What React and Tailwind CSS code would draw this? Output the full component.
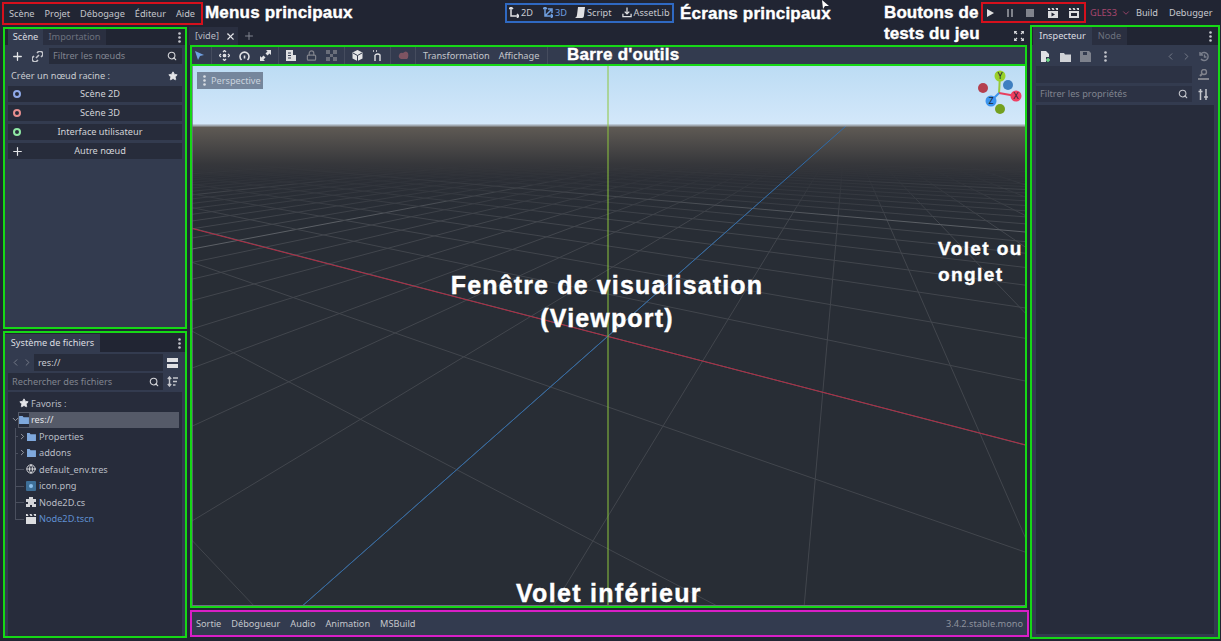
import { Plus, Search, Star, ChevronLeft, ChevronRight, ChevronDown, Lock, Globe, X } from 'lucide-react';

const UI = "font-['Noto_Sans',sans-serif]";

// Ground grid: each family runs to a vanishing point on the horizon and cuts y=608 at even steps
const VP_A = [846, 126];
const VP_B = [-200, 126];
const range = (from, to) => Array.from({ length: to - from + 1 }, (_, i) => from + i);

function ViewportDrawing() {
  const familyA = range(-60, 30);
  const familyB = range(-3, 70);
  return (
    <svg width="833" height="540" viewBox="192 66 833 540" className="block">
      <defs>
        <linearGradient id="sky" x1="0" y1="0" x2="0" y2="1">
          <stop offset="0" stopColor="#bcdcf4" />
          <stop offset="1" stopColor="#d4e8fa" />
        </linearGradient>
        <linearGradient id="fade" x1="0" y1="0" x2="0" y2="1">
          <stop offset="0" stopColor="#605b55" />
          <stop offset="0.4" stopColor="#36373b" />
          <stop offset="0.55" stopColor="#2c2f36" stopOpacity="0.85" />
          <stop offset="1" stopColor="#282d35" stopOpacity="0" />
        </linearGradient>
      </defs>
      <rect x="192" y="66" width="833" height="60" fill="url(#sky)" />
      <rect x="192" y="126" width="833" height="480" fill="#282d35" />
      {familyA.map((k) => (
        <line key={k} x1={VP_A[0]} y1={VP_A[1]} x2={300 + 252 * k} y2="608" stroke={k % 8 === 0 ? '#5c6066' : '#42464d'} strokeWidth="1" />
      ))}
      {familyB.map((k) => (
        <line key={k} x1={VP_B[0]} y1={VP_B[1]} x2={1651 + 465 * k} y2="608" stroke={k % 8 === 0 ? '#5c6066' : '#42464d'} strokeWidth="1" />
      ))}
      <line x1="190" y1="228" x2="1026" y2="445" stroke="#b02c44" strokeWidth="1" />
      <rect x="192" y="126" width="833" height="95" fill="url(#fade)" />
      <line x1="846" y1="126" x2="300" y2="608" stroke="#2f6cab" strokeWidth="1" />
      <rect x="192" y="124.500" width="833" height="2" fill="#a0a8b0" />
      <line x1="608" y1="66" x2="608" y2="606" stroke="#8dc63f" strokeWidth="1" />
      <line x1="192" y1="66" x2="192" y2="606" stroke="#6b7082" strokeWidth="1.500" />
      <line x1="192" y1="605.500" x2="1025" y2="605.500" stroke="#6b7082" strokeWidth="1" />
    </svg>
  );
}

function Gizmo() {
  return (
    <svg width="48" height="48" viewBox="0 0 48 48" className="absolute left-[784px] top-[2px]">
      <line x1="23" y1="25" x2="24" y2="8" stroke="#97c93a" strokeWidth="2" />
      <line x1="23" y1="25" x2="40" y2="28" stroke="#e8405f" strokeWidth="2" />
      <line x1="23" y1="25" x2="15" y2="33" stroke="#3f94ea" strokeWidth="2" />
      <circle cx="7" cy="20" r="5" fill="#b5404f" />
      <circle cx="32" cy="17" r="5" fill="#3f7fc0" />
      <circle cx="24" cy="41" r="5" fill="#74a01f" />
      <circle cx="24" cy="8" r="5.500" fill="#9ad029" />
      <circle cx="40" cy="28" r="5.500" fill="#ee3f63" />
      <circle cx="15" cy="33" r="5.500" fill="#3c94ee" />
      <text x="24" y="11" textAnchor="middle" fontSize="9" fill="#1e2530" fontFamily="Noto Sans">Y</text>
      <text x="40" y="31" textAnchor="middle" fontSize="9" fill="#1e2530" fontFamily="Noto Sans">X</text>
      <text x="15" y="36" textAnchor="middle" fontSize="9" fill="#1e2530" fontFamily="Noto Sans">Z</text>
    </svg>
  );
}

function Dots({ className = 'text-[#c4c6cc]' }) {
  return (
    <svg width="3" height="11" viewBox="0 0 3 11" className={`block ${className}`}>
      <circle cx="1.500" cy="1.500" r="1.300" fill="currentColor" />
      <circle cx="1.500" cy="5.500" r="1.300" fill="currentColor" />
      <circle cx="1.500" cy="9.500" r="1.300" fill="currentColor" />
    </svg>
  );
}

function Folder() {
  return (
    <svg width="10" height="9" viewBox="0 0 11 10" className="shrink-0">
      <path d="M0 1h4l1 1.500h6V10H0z" fill="#7fa8dc" />
    </svg>
  );
}

function Clap({ inner }) {
  return (
    <svg width="12" height="11" viewBox="0 0 12 11" className="shrink-0">
      <path d="M1 4h10v7H1zM1 1h1.500l1 2H1zM4.500 1h2l1 2h-2zM8.500 1H11v2H9.500z" fill="#dcdde0" />
      {inner === 'play' ? <path d="M4.500 5.500l3.500 2-3.500 2z" fill="#212533" /> : null}
      {inner === 'custom' ? <path d="M3 6h6v3H3z" fill="#212533" /> : null}
    </svg>
  );
}

function ToolIcon({ children, className = 'w-[20.5px]' }) {
  return <span className={`flex justify-center ${className}`}>{children}</span>;
}

function Sep() {
  return <span className="mx-[2px] h-[17px] w-px bg-[#454c5e]" />;
}

function CreateButton({ ring, label }) {
  return (
    <div className="relative flex h-[16px] items-center justify-center bg-[#272c3b] pl-[10px] text-[#d2d3d7]">
      <span className="absolute left-[5px]">{ring}</span>
      {label}
    </div>
  );
}

function Ring({ color }) {
  return <span className="block h-[8px] w-[8px] rounded-full border-2" style={{ borderColor: color }} />;
}

function Tab({ active, children, className = '' }) {
  return (
    <span className={`flex items-center whitespace-nowrap ${active ? 'bg-[#333b4f] text-[#dcdde0]' : 'bg-[#2a2f40] text-[#6c717e]'} ${className}`}>
      {children}
    </span>
  );
}

function TreeRow({ icon, label, chevron, last }) {
  return (
    <div className="relative flex h-[16.5px] items-center gap-[2px] pl-[17px]">
      <span className={`absolute left-[7px] top-0 w-px bg-[#4a4f5e] ${last ? 'h-[8px]' : 'h-full'}`} />
      <span className="absolute left-[7px] top-[8px] h-px w-[9px] bg-[#4a4f5e]" />
      {chevron ? <ChevronRight size={9} strokeWidth={2.4} className="absolute left-[10px] bg-[#272c3b] text-[#a3a6ae]" /> : null}
      <span className="flex w-[12px] justify-center">{icon}</span>
      <span>{label}</span>
    </div>
  );
}

function Note({ className, children }) {
  return (
    <span className={`absolute font-['Liberation_Sans',sans-serif] font-bold whitespace-nowrap text-white [-webkit-text-stroke:0.4px_white] ${className}`}>
      {children}
    </span>
  );
}

export default function App() {
  return (
    <div className={`${UI} relative flex h-[641px] w-[1221px] flex-col overflow-hidden bg-[#212533] text-[9.2px] leading-none text-[#c8cad0]`}>
      {/* top bar */}
      <header className="flex h-[25px] items-center">
        <nav className="ml-[2px] mt-[2px] flex h-[23px] w-[201px] items-center gap-[10px] border-2 border-[#d6101c] pl-[5px] text-[#c4c6cb]">
          <span>Scène</span>
          <span>Projet</span>
          <span>Débogage</span>
          <span>Éditeur</span>
          <span>Aide</span>
        </nav>
        <div className="ml-[302px] flex h-[20px] w-[169px] items-center gap-[10px] border-2 border-[#2f69c2] pl-[2px]">
          <span className="flex items-center gap-[2px]">
            <svg width="10" height="11" viewBox="0 0 10 11" fill="none" stroke="#dfe0e3" strokeWidth="1.500"><path d="M2 0v9h8M0 2l2-2 2 2M8 7l2 2-2 2" /></svg>2D
          </span>
          <span className="flex items-center gap-[2px] text-[#6f9fe0]">
            <svg width="10" height="11" viewBox="0 0 10 11" fill="none" stroke="#6f9fe0" strokeWidth="1.500"><path d="M2 0v9h8M2 9l6-6M0 2l2-2 2 2M5 2h4v4M8 7l2 2-2 2" /></svg>3D
          </span>
          <span className="-ml-[2px] flex items-center gap-[2px]">
            <svg width="10" height="11" viewBox="0 0 10 11"><path d="M3 0h7l-1 8q0 3-2 3H0q2-1 2-3z" fill="#dfe0e3" /></svg>Script
          </span>
          <span className="flex items-center gap-[2px]">
            <svg width="10" height="11" viewBox="0 0 11 11" fill="none" stroke="#dfe0e3" strokeWidth="1.400"><path d="M5.500 0v7M3 4.500l2.500 2.500L8 4.500M1 7v3h9V7" /></svg>AssetLib
          </span>
        </div>
        <div className="ml-[307px] mt-[2px] flex h-[21px] w-[105px] items-center gap-[10px] self-start border-2 border-[#d6101c] pl-[2px]">
          <svg width="10" height="10" viewBox="0 0 10 10"><path d="M2 1l7 4-7 4z" fill="#e0e0e0" /></svg>
          <svg width="10" height="10" viewBox="0 0 10 10"><path d="M2 1h2v8H2zM6 1h2v8H6z" fill="#80838c" /></svg>
          <svg width="10" height="10" viewBox="0 0 10 10"><path d="M1 1h8v8H1z" fill="#80838c" /></svg>
          <span className="ml-[2px]"><Clap inner="play" /></span>
          <span className="-ml-[1px]"><Clap inner="custom" /></span>
        </div>
        <span className="ml-[4px] flex items-center gap-[1px] text-[#a8476f]">GLES3 <ChevronDown size={10} className="ml-[3px]" /></span>
        <span className="ml-[5px]">Build</span>
        <span className="ml-[11px]">Debugger</span>
      </header>

      <div className="flex flex-1">
        {/* left docks */}
        <aside className="flex w-[188px] flex-col pt-[2px]">
          <section className="ml-[3px] flex h-[302px] w-[184px] flex-col border-2 border-[#16d816]">
            <div className="flex h-[16px] items-center pl-[3px] pr-[4px]">
              <Tab active className="h-[16px] w-[35px] justify-center">Scène</Tab>
              <Tab className="h-[16px] w-[63px] justify-center">Importation</Tab>
              <span className="ml-auto"><Dots /></span>
            </div>
            <div className="flex flex-1 flex-col bg-[#333b4f] px-[3px] pt-[3px]">
              <div className="flex h-[16px] items-center">
                <Plus size={13} strokeWidth={2.4} className="ml-[3px] text-[#e4e5e8]" />
                <svg width="11" height="11" viewBox="0 0 11 11" fill="none" stroke="#c4c6cc" strokeWidth="1.600" className="ml-[7.5px]"><path d="M5 2l1.500-1.500q2-1 3.500.5t.5 3.500L9 6M6 9l-1.500 1.500q-2 1-3.500-.5T.5 6.500L2 5M4 7l3-3" /></svg>
                <span className="ml-[6.5px] flex h-[16px] flex-1 items-center justify-between bg-[#272c3b] pl-[4px] pr-[5px] text-[#80848f]">
                  Filtrer les nœuds
                  <Search size={10} strokeWidth={2.6} className="text-[#d4d5d9]" />
                </span>
              </div>
              <div className="mt-[2px] flex h-[19px] items-center justify-between pl-[3px] pr-[4px] text-[#c9cbd0]">
                Créer un nœud racine :
                <Star size={10} fill="#e4e5e8" className="text-[#e4e5e8]" />
              </div>
              <div className="mt-[1px] flex flex-col gap-[3px]">
                <CreateButton ring={<Ring color="#8fa9e8" />} label="Scène 2D" />
                <CreateButton ring={<Ring color="#e88f8f" />} label="Scène 3D" />
                <CreateButton ring={<Ring color="#8fe8a4" />} label="Interface utilisateur" />
                <CreateButton ring={<Plus size={13} strokeWidth={2.2} className="-ml-[2px] text-[#e4e5e8]" />} label="Autre nœud" />
              </div>
            </div>
          </section>

          <section className="ml-[3px] mt-[2px] flex h-[307px] w-[184px] flex-col border-2 border-[#16d816] pt-[1px]">
            <div className="flex h-[18px] items-center pr-[4px]">
              <Tab active className="h-[18px] w-[95px] justify-center">Système de fichiers</Tab>
              <span className="ml-auto"><Dots /></span>
            </div>
            <div className="flex flex-1 flex-col bg-[#333b4f] px-[3px] pt-[2px]">
              <div className="flex h-[17px] items-center">
                <ChevronLeft size={11} className="ml-[2px] text-[#7a7f8c]" />
                <ChevronRight size={11} className="ml-[1px] text-[#7a7f8c]" />
                <span className="ml-[1px] flex h-[17px] w-[129px] items-center bg-[#272c3b] pl-[4px]">res://</span>
                <span className="ml-[4px] flex flex-col gap-[2px]">
                  <span className="block h-[4px] w-[11px] bg-[#dfe0e3]" />
                  <span className="block h-[4px] w-[11px] bg-[#dfe0e3]" />
                </span>
              </div>
              <div className="mt-[2px] flex h-[17px] items-center">
                <span className="flex h-[17px] w-[155px] items-center justify-between bg-[#272c3b] pl-[4px] pr-[4px] text-[#80848f]">
                  Rechercher des fichiers
                  <Search size={10} strokeWidth={2.6} className="text-[#d4d5d9]" />
                </span>
                <svg width="11" height="11" viewBox="0 0 11 11" fill="none" stroke="#c4c6cc" strokeWidth="1.400" className="ml-[4px]"><path d="M2.500 1v9M.8 3l1.700-2L4.200 3M.8 8l1.700 2 1.700-2M6 2h5M6 5.500h4M6 9h2.500" /></svg>
              </div>
              <div className="mt-[2px] flex-1 bg-[#272c3b] pb-[2px] pt-[3px] text-[#b9bcc4]">
                <div className="flex h-[16.5px] items-center gap-[2px] pl-[11px]">
                  <Star size={10} fill="#e4e5e8" className="text-[#e4e5e8]" />
                  Favoris :
                </div>
                <div className="relative ml-[10px] mr-[3px] flex h-[16.5px] items-center bg-[#555a68] text-[#e4e5e8]">
                  <ChevronDown size={9} strokeWidth={2.4} className="absolute -left-[7px] text-[#a3a6ae]" />
                  <span className="ml-[1px] flex h-[14px] w-[10px] items-center justify-center bg-[#272c3b]"><Folder /></span>
                  <span className="ml-[2px]">res://</span>
                </div>
                <TreeRow chevron icon={<Folder />} label="Properties" />
                <TreeRow chevron icon={<Folder />} label="addons" />
                <TreeRow icon={<Globe size={10} strokeWidth={2.4} className="text-[#d4d5d9]" />} label="default_env.tres" />
                <TreeRow icon={<span className="block h-[10px] w-[10px] rounded-[1px] bg-[#3e6f98] pt-[3px]"><span className="mx-auto block h-[4px] w-[4px] rounded-full bg-[#8cc0ec]" /></span>} label="icon.png" />
                <TreeRow icon={<svg width="10" height="10" viewBox="0 0 10 10"><path d="M3 0h4v2h3v3H8v2h2v3H6V8H4v2H0V7h2V5H0V2h3z" fill="#d4d5d9" /></svg>} label="Node2D.cs" />
                <TreeRow last icon={<Clap />} label={<span className="text-[#5f8fd0]">Node2D.tscn</span>} />
              </div>
            </div>
          </section>
        </aside>

        {/* center */}
        <main className="flex w-[842px] flex-col pl-[2px]">
          <div className="flex h-[20px] items-center pr-[6px] pt-[2px]">
            <span className="-ml-[1px] flex h-[18px] w-[49px] items-center justify-between bg-[#2a2f40] pl-[6px] pr-[2px] text-[#b9bcc4]">
              [vide]
              <X size={11} strokeWidth={2.4} className="text-[#e4e5e8]" />
            </span>
            <Plus size={12} className="ml-[5px] text-[#80848f]" />
            <svg width="10" height="10" viewBox="0 0 10 10" fill="none" stroke="#dfe0e3" strokeWidth="1.300" className="ml-auto"><path d="M0 3V0h3M7 0h3v3M10 7v3H7M3 10H0V7M1 1l2 2M9 1L7 3M9 9L7 7M1 9l2-2" /></svg>
          </div>
          <div className="flex h-[21px] w-[837px] items-center border-2 border-[#16d816] bg-[#333b4f] text-[#c4c6cb]">
            <ToolIcon className="mr-[3px] w-[14px]"><svg width="9" height="10" viewBox="0 0 9 10"><path d="M0 0l9 4-4 1-2 4z" fill="#6f9fe0" /></svg></ToolIcon>
            <Sep />
            <ToolIcon><svg width="11" height="11" viewBox="0 0 11 11" fill="none" stroke="#dfe0e3" strokeWidth="1.300"><path d="M4 2l1.500-1.500L7 2M4 9l1.500 1.500L7 9M2 4L.5 5.500 2 7M9 4l1.500 1.500L9 7" /><circle cx="5.500" cy="5.500" r="1.200" fill="#dfe0e3" /></svg></ToolIcon>
            <ToolIcon><svg width="11" height="11" viewBox="0 0 11 11" fill="none" stroke="#dfe0e3" strokeWidth="1.600"><path d="M2.500 10a4.500 4.500 0 1 1 6 0M5.500 5.500v3" /></svg></ToolIcon>
            <ToolIcon><svg width="11" height="11" viewBox="0 0 11 11" fill="#dfe0e3"><path d="M6 0h5v5L9.500 3.500 7.500 5.500 5.500 3.500 7.500 1.500zM5 11H0V6l1.500 1.500 2-2 2 2-2 2z" /></svg></ToolIcon>
            <Sep />
            <ToolIcon><svg width="11" height="11" viewBox="0 0 11 11"><path d="M1 0h7v5h3v6H1z" fill="#dfe0e3" /><path d="M3 3h3M3 5.500h3M3 8h3" stroke="#333b4f" /></svg></ToolIcon>
            <ToolIcon><Lock size={11} strokeWidth={2.6} className="text-[#80838c]" /></ToolIcon>
            <ToolIcon><svg width="11" height="11" viewBox="0 0 11 11" fill="#6a6e7a"><path d="M0 0h4v4H0zM7 0h4v4H7zM0 7h4v4H0zM7 7h4v4H7zM4 4h3v3H4z" /></svg></ToolIcon>
            <Sep />
            <ToolIcon><svg width="11" height="11" viewBox="0 0 11 11"><path d="M5.500 0l5 2.500v6L5.500 11l-5-2.500v-6z" fill="#e4e5e8" /><path d="M1 3l4.500 2.500L10 3M5.500 5.500V11" stroke="#333b4f" fill="none" /></svg></ToolIcon>
            <ToolIcon><svg width="11" height="11" viewBox="0 0 11 11" fill="none" stroke="#dfe0e3" strokeWidth="1.400"><path d="M1 1h1M4 1h1M3 5q3-2 5 0v6M3 5v6" /></svg></ToolIcon>
            <Sep />
            <ToolIcon className="w-[20px]"><svg width="11" height="10" viewBox="0 0 11 10"><path d="M1 4q1-3 4-2 3-3 5 0 1 4-1 6H3q-3-1-2-4z" fill="#7d5462" /></svg></ToolIcon>
            <Sep />
            <span className="ml-[5px]">Transformation</span>
            <span className="ml-[9px]">Affichage</span>
            <span className="ml-[8px] h-[17px] w-px bg-[#454c5e]" />
          </div>
          <div className="relative w-[837px] border-2 border-t-0 border-[#16d816]">
            <ViewportDrawing />
            <div className="absolute left-[5px] top-[6px] flex h-[17px] w-[66px] items-center gap-[5px] bg-[#75869c] pl-[6px] text-[#c9d3de]">
              <Dots className="text-[#d8dde3]" />
              Perspective
            </div>
            <Gizmo />
          </div>
          <div className="mt-[2px] flex h-[27px] w-[839px] items-center gap-[10px] border-2 border-[#d91fc7] bg-[#333b4f] pl-[4px] text-[#c4c6cb]">
            <span>Sortie</span>
            <span>Débogueur</span>
            <span>Audio</span>
            <span>Animation</span>
            <span>MSBuild</span>
            <span className="ml-auto mr-[4px] text-[#8e929d]">3.4.2.stable.mono</span>
          </div>
        </main>

        {/* inspector */}
        <aside className="flex h-[614px] w-[190px] flex-col border-2 border-[#16d816]">
          <div className="flex h-[18px] items-center pl-[1px] pr-[6px]">
            <Tab active className="h-[18px] w-[59px] justify-center">Inspecteur</Tab>
            <Tab className="h-[18px] w-[35px] justify-center">Node</Tab>
            <span className="ml-auto"><Dots /></span>
          </div>
          <div className="flex flex-1 flex-col bg-[#333b4f] px-[4px] pt-[3px]">
            <div className="flex h-[17px] items-center">
              <svg width="11" height="12" viewBox="0 0 11 12" className="ml-[4px]"><path d="M1 0h5l3 3v3H6v5H1z" fill="#dfe0e3" /><path d="M8 7v4M6 9h4" stroke="#6fe08a" strokeWidth="1.500" /></svg>
              <svg width="11" height="10" viewBox="0 0 11 10" className="ml-[9px]"><path d="M0 1h4l1 1.500h6V10H0z" fill="#d0d2d6" /></svg>
              <svg width="11" height="11" viewBox="0 0 11 11" className="ml-[9px]"><path d="M0 0h9l2 2v9H0z" fill="#7d818c" /><path d="M3 1h4v3H3z" fill="#333b4f" /></svg>
              <span className="ml-[13px]"><Dots /></span>
              <ChevronLeft size={11} className="ml-auto text-[#7a7f8c]" />
              <ChevronRight size={11} className="ml-[4.500px] text-[#7a7f8c]" />
              <svg width="11" height="11" viewBox="0 0 11 11" fill="none" stroke="#7a7f8c" strokeWidth="1.400" className="ml-[7px] mr-[4.500px]"><path d="M2 3a4 4 0 1 1 0 5M1 1v3h3M5.500 3.500v2.500h2" /></svg>
            </div>
            <div className="mt-[1px] flex h-[17px] items-center">
              <span className="h-[17px] w-[156px] bg-[#2c3244]" />
              <svg width="11" height="12" viewBox="0 0 11 12" fill="none" stroke="#80838c" strokeWidth="1.400" className="ml-[6px]"><circle cx="6" cy="3" r="2.500" /><path d="M4 5L2 7M0 10h11" strokeWidth="2" /></svg>
            </div>
            <div className="mt-[3px] flex h-[16px] items-center">
              <span className="flex h-[16px] w-[156px] items-center justify-between bg-[#2c3244] pl-[4px] pr-[4px] text-[#80848f]">
                Filtrer les propriétés
                <Search size={10} strokeWidth={2.6} className="text-[#c4c6cc]" />
              </span>
              <svg width="11" height="11" viewBox="0 0 11 11" fill="none" stroke="#c4c6cc" strokeWidth="1.500" className="ml-[6px]"><path d="M2.500 0v11M.5 2.500h4M8 0v11M6 8h4" /></svg>
            </div>
            <div className="mb-[3px] mt-[3px] flex-1 bg-[#272c3b]" />
          </div>
        </aside>
      </div>

      {/* annotations laid over the screenshot */}
      <Note className="left-[205px] top-[3px] text-[17px] leading-[20px] tracking-[0.2px]">Menus principaux</Note>
      <Note className="left-[680px] top-[4px] text-[17px] leading-[20px] tracking-[0.2px]">Écrans principaux</Note>
      <Note className="left-[884px] top-[2px] text-[17px] leading-[21px] tracking-[0.1px]">Boutons de<br />tests du jeu</Note>
      <Note className="left-[567px] top-[45px] text-[17px] leading-[20px] tracking-[0.25px]">Barre d'outils</Note>
      <Note className="left-[938px] top-[236px] text-[19px] leading-[26px] tracking-[1.4px]">Volet ou<br />onglet</Note>
      <Note className="left-[441px] top-[269px] w-[332px] text-center text-[25px] leading-[33px] tracking-[1.150px]">Fenêtre de visualisation<br />(Viewport)</Note>
      <Note className="left-[516px] top-[579px] text-[25px] leading-[28px] tracking-[1.300px]">Volet inférieur</Note>
      <svg width="9" height="9" viewBox="0 0 9 9" className="absolute left-[821px] top-0"><path d="M1 0l7 6H4l-2 3z" fill="#ffffff" /></svg>
    </div>
  );
}
